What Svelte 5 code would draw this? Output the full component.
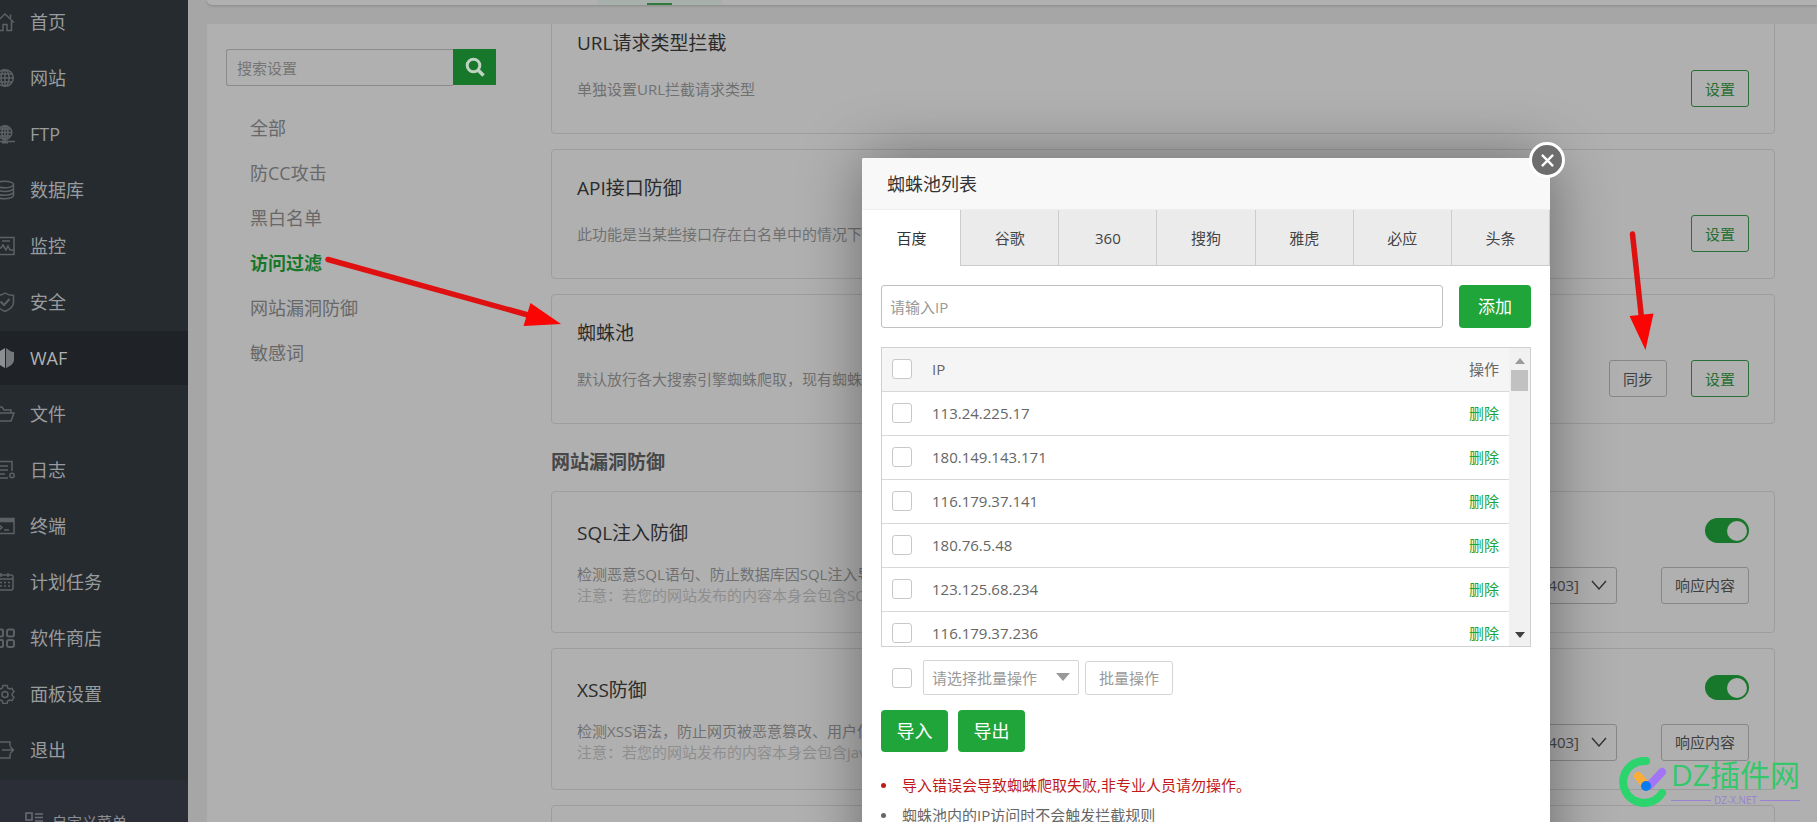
<script>
  const nav = [
    { label: '首页', icon: 'home' },
    { label: '网站', icon: 'globe' },
    { label: 'FTP', icon: 'ftp' },
    { label: '数据库', icon: 'db' },
    { label: '监控', icon: 'monitor' },
    { label: '安全', icon: 'safe' },
    { label: 'WAF', icon: 'waf', active: true },
    { label: '文件', icon: 'folder' },
    { label: '日志', icon: 'log' },
    { label: '终端', icon: 'term' },
    { label: '计划任务', icon: 'cron' },
    { label: '软件商店', icon: 'store' },
    { label: '面板设置', icon: 'gear' },
    { label: '退出', icon: 'exit' }
  ];
  const filters = ['全部', '防CC攻击', '黑白名单', '访问过滤', '网站漏洞防御', '敏感词'];
  const basic = [
    { title: 'URL请求类型拦截', desc: '单独设置URL拦截请求类型' },
    { title: 'API接口防御', desc: '此功能是当某些接口存在白名单中的情况下' },
    { title: '蜘蛛池', desc: '默认放行各大搜索引擎蜘蛛爬取，现有蜘蛛', sync: true }
  ];
  const leaks = [
    { id: 'sql', title: 'SQL注入防御', desc: '检测恶意SQL语句、防止数据库因SQL注入导', note: '注意：若您的网站发布的内容本身会包含SQL' },
    { id: 'xss', title: 'XSS防御', desc: '检测XSS语法，防止网页被恶意篡改、用户信', note: '注意：若您的网站发布的内容本身会包含java' }
  ];
  const tabs = ['百度', '谷歌', '360', '搜狗', '雅虎', '必应', '头条'];
  const ips = ['113.24.225.17', '180.149.143.171', '116.179.37.141', '180.76.5.48', '123.125.68.234', '116.179.37.236'];
  let tab = $state('百度');
  let filter = $state('访问过滤');
</script>

<div class="app">
  <aside class="sidebar">
    <nav>
      {#each nav as item}
        <a href="#{item.icon}" class="nav-item" class:active={item.active}>
          <svg viewBox="0 0 20 20" fill="none" stroke="currentColor" stroke-width="1.5" aria-hidden="true">
            {#if item.icon === 'home'}
              <path d="M1 10.5 10 2l9 8.500M15.500 6V2.500M3.500 9v9.500h4.500v-6h4v6h4.500V9" />
            {:else if item.icon === 'globe'}
              <circle cx="10" cy="10" r="8.300" /><ellipse cx="10" cy="10" rx="4" ry="8.300" /><path d="M10 2v16M2 10h16M3 6h14M3 14h14" />
            {:else if item.icon === 'ftp'}
              <circle cx="10" cy="8.500" r="6.800" /><ellipse cx="10" cy="8.500" rx="3" ry="6.800" /><path d="M10 2v15M3.500 8.500h13M4.500 5h11M4.500 12h11M0 17.500h20" /><path d="M7 18h6" stroke-width="3" />
            {:else if item.icon === 'db'}
              <ellipse cx="9.500" cy="4.500" rx="9" ry="3.300" /><path d="M.5 4.500v11c0 1.800 4 3.300 9 3.300s9-1.500 9-3.300v-11M.5 8.200c0 1.800 4 3.300 9 3.300s9-1.500 9-3.300M.5 12c0 1.800 4 3.300 9 3.300s9-1.500 9-3.300" />
            {:else if item.icon === 'monitor'}
              <rect x="1" y="1.500" width="18" height="17" /><path d="M7 5h8M2 12h4l2-3 3 5 2-4 2 4h4" />
            {:else if item.icon === 'safe'}
              <path d="M10 1c3 2 6 2.500 8.500 2.500v7c0 4-4 7-8.500 9-4.500-2-8.500-5-8.500-9v-7C4 3.500 7 3 10 1z" /><path d="m5.500 9.500 3.500 3.500 5.500-6" stroke-width="2" />
            {:else if item.icon === 'waf'}
              <path d="M10 0v20C4 17 1 14 1 11V4c3 0 6-2 9-4z" fill="#8d8f92" stroke="none" /><path d="M11 0c3 2 5 4 8 4v8c0 3-3 6-8 8z" fill="#74777a" stroke="none" />
            {:else if item.icon === 'folder'}
              <path d="M1 17V3h6l2 3h7v3M1 17h15l3-8H5L1 17" />
            {:else if item.icon === 'log'}
              <path d="M17 11V1.500H1V18h12M5 6h8M5 10h8M5 14h5" /><circle cx="17" cy="15.500" r="2.200" />
            {:else if item.icon === 'term'}
              <rect x="1" y="2.500" width="18" height="15" /><path d="M1 4.500h18" stroke-width="3.500" /><path d="m4 9 3 2.500L4 14M9 14h5" />
            {:else if item.icon === 'cron'}
              <rect x="1" y="3" width="17" height="15" rx="2" /><path d="M1 7h17M6 1v4M13 1v4M5 10.500h2M9 10.500h2M13 10.500h2M5 14h2M9 14h2M13 14h2" />
            {:else if item.icon === 'store'}
              <g stroke-width="2"><rect x="1" y="1.500" width="7" height="7" rx="1" /><rect x="12" y="1.500" width="7" height="7" rx="2" /><rect x="1" y="12" width="7" height="7" rx="1" /><rect x="12" y="12" width="7" height="7" rx="2" /></g>
            {:else if item.icon === 'gear'}
              <path d="M8 1.500h4l.7 2.500 1.800 1 2.500-.7 2 3.400-1.800 1.900v1.800l1.800 1.900-2 3.400-2.500-.7-1.800 1-.7 2.500H8L7.300 17l-1.800-1-2.500.7-2-3.400 1.800-1.900V9.600L1 7.700l2-3.400 2.500.7 1.800-1z" /><circle cx="10" cy="10.500" r="3" />
            {:else}
              <path d="M15 6V2H1v16h14v-4M7 10h11M15 6.500l3.500 3.500-3.500 3.500" />
            {/if}
          </svg>
          <span>{item.label}</span>
        </a>
      {/each}
    </nav>
    <a href="#custom" class="custom">
      <svg viewBox="0 0 18 18" fill="none" stroke="currentColor" stroke-width="1.500" aria-hidden="true">
        <path d="M1 1h6v7H1zM1 12h6v5H1zM10 2h8M10 5.500h8M10 9h8M10 13h8M10 16.500h8" />
      </svg>
      <span>自定义菜单</span>
    </a>
  </aside>

  <main>
    <header class="topbar"><div class="toptab"></div></header>

    <section class="panel">
      <div class="filter">
        <form class="search">
          <input type="text" placeholder="搜索设置" aria-label="搜索设置" />
          <button type="button" aria-label="搜索">
            <svg viewBox="0 0 20 20" fill="none" stroke="currentColor" aria-hidden="true">
              <circle cx="8.500" cy="8.500" r="6.300" stroke-width="3" /><path d="m13 13 5.500 5.500" stroke-width="3.500" />
            </svg>
          </button>
        </form>
        <ul>
          {#each filters as f}
            <li><button type="button" class:on={filter === f} onclick={() => (filter = f)}>{f}</button></li>
          {/each}
        </ul>
      </div>

      <div class="content">
        {#each basic as c}
          <article class="card">
            <h3>{c.title}</h3>
            <div class="row">
              <p>{c.desc}</p>
              <div class="actions">
                {#if c.sync}<button type="button" class="btn">同步</button>{/if}
                <button type="button" class="btn green">设置</button>
              </div>
            </div>
          </article>
        {/each}

        <h2>网站漏洞防御</h2>

        {#each leaks as c}
          <article class="card tall">
            <div class="row head">
              <h3>{c.title}</h3>
              <label class="switch"><input type="checkbox" checked aria-label={c.title} /><i></i></label>
            </div>
            <div class="row">
              <div class="text"><p>{c.desc}</p><p class="note">{c.note}</p></div>
              <div class="actions wide">
                <div class="code">
                  <select aria-label="响应"><option>[403]</option></select>
                  <svg viewBox="0 0 16 10" fill="none" stroke="currentColor" stroke-width="1.400" aria-hidden="true"><path d="m1 1 7 8 7-8" /></svg>
                </div>
                <button type="button" class="btn">响应内容</button>
              </div>
            </div>
          </article>
        {/each}
        <article class="card tall"></article>
      </div>
    </section>
  </main>

  <div class="dialog" role="dialog" aria-labelledby="dlg-title">
    <button type="button" class="close" aria-label="关闭">
      <svg viewBox="0 0 14 14" fill="none" stroke="currentColor" stroke-width="2.500" aria-hidden="true"><path d="m1 1 12 12M13 1 1 13" /></svg>
    </button>
    <h1 id="dlg-title">蜘蛛池列表</h1>
    <div class="tabs" role="tablist">
      {#each tabs as t}
        <button type="button" role="tab" aria-selected={tab === t} class:on={tab === t} onclick={() => (tab = t)}>{t}</button>
      {/each}
    </div>
    <div class="body">
      <div class="add">
        <input type="text" placeholder="请输入IP" aria-label="请输入IP" />
        <button type="button" class="solid">添加</button>
      </div>

      <div class="list">
        <table>
          <thead>
            <tr><th class="check"><input type="checkbox" aria-label="全选" /></th><th>IP</th><th class="op">操作</th></tr>
          </thead>
          <tbody>
            {#each ips as ip}
              <tr>
                <td class="check"><input type="checkbox" aria-label={ip} /></td>
                <td>{ip}</td>
                <td class="op"><a href="#del">删除</a></td>
              </tr>
            {/each}
          </tbody>
        </table>
        <div class="scroll">
          <svg viewBox="0 0 10 6" fill="#9b9b9b" aria-hidden="true"><path d="M5 0l5 6H0z" /></svg>
          <div class="thumb"></div>
          <svg viewBox="0 0 10 6" fill="#404040" aria-hidden="true"><path d="M5 6l5-6H0z" /></svg>
        </div>
      </div>

      <div class="batch">
        <input type="checkbox" aria-label="批量" />
        <div class="pick">
          <select aria-label="批量操作"><option>请选择批量操作</option></select>
          <svg viewBox="0 0 14 8" fill="currentColor" aria-hidden="true"><path d="M0 0h14L7 8z" /></svg>
        </div>
        <button type="button">批量操作</button>
      </div>

      <div class="io">
        <button type="button" class="solid">导入</button>
        <button type="button" class="solid">导出</button>
      </div>

      <ul class="tips">
        <li class="warn">导入错误会导致蜘蛛爬取失败,非专业人员请勿操作。</li>
        <li>蜘蛛池内的IP访问时不会触发拦截规则</li>
      </ul>
    </div>
  </div>

  <svg class="marks" width="1817" height="822" viewBox="0 0 1817 822" aria-hidden="true">
    <g stroke="#df1010" stroke-width="5.500" stroke-linecap="round"><path d="M328 259.500 528 315" /><path d="m1632.500 234 9 84" /></g>
    <g fill="#fb0404"><path d="M561 324 530.500 303l-7 23z" /><path d="m1645.500 350-16-34 24-2.500z" /></g>
  </svg>

  <div class="brand">
    <svg viewBox="0 0 48 52" fill="none" stroke-linecap="round" aria-hidden="true">
      <path d="M27 5A21 21 0 1 0 43 37" stroke="#2bd46d" stroke-width="8" />
      <path d="m19 20 7 8" stroke="#ffae35" stroke-width="8" />
      <path d="M43 16 31 29" stroke="#a374f5" stroke-width="8" />
      <circle cx="27" cy="30" r="5" fill="#0b7cf0" />
    </svg>
    <div>
      <strong>DZ插件网</strong>
      <small>DZ-X.NET</small>
    </div>
  </div>
</div>

<style>
  :global(body) { overflow: hidden; }
  .app, .app :global(*) { box-sizing: border-box; }
  .app {
    position: relative;
    display: grid;
    grid-template-columns: 188px 1fr;
    height: 100vh;
    overflow: hidden;
    background: #a6a6a6;
    font-family: "Open Sans", "Noto Sans CJK SC", sans-serif;
    font-size: 15px;
    line-height: 20px;
    color: #666;
  }
  button, input, select { font: inherit; color: inherit; margin: 0; }
  button { cursor: pointer; padding: 0; white-space: nowrap; }
  a { color: inherit; text-decoration: none; }
  h1, h2, h3, p, ul { margin: 0; padding: 0; font-weight: 400; }
  ul { list-style: none; }
  select { appearance: none; outline: none; }
  svg { display: block; flex: none; }

  .sidebar { overflow: hidden; background: #262b30; display: flex; flex-direction: column; }
  nav { display: flex; flex-direction: column; gap: 2px; margin-top: -5px; padding-bottom: 3px; flex: none; }
  .nav-item { display: flex; align-items: center; gap: 15px; height: 54px; margin-left: -5px; font-size: 18px; color: #999c9e; }
  .nav-item svg { width: 20px; height: 20px; color: #5d6165; }
  .nav-item.active { background: #1f2227; color: #b0b1b3; }
  .custom { display: flex; gap: 9px; flex: none; height: 80px; padding: 32px 0 0 25px; color: #8b8d91; background: #2b2e37; }
  .custom svg { width: 18px; height: 18px; color: #6b6e74; }

  main { display: flex; flex-direction: column; gap: 19px; min-width: 0; padding-left: 19px; overflow: hidden; }
  .topbar { flex: none; height: 5px; padding-left: 390px; background: #b1b1b1; border-radius: 0 0 0 6px; box-shadow: 0 1px 3px rgba(0, 0, 0, .18); }
  .toptab { width: 125px; height: 5px; background: linear-gradient(#2f7a3c, #2f7a3c) center bottom / 25px 2px no-repeat #a8b0ac; }
  .panel { flex: 1; min-height: 0; display: grid; grid-template-columns: 289px 1fr; gap: 55px; padding: 0 42px 0 0; background: #b0b0b0; overflow: hidden; }
  .filter { padding: 25px 0 0 19px; }
  .search { display: flex; }
  .search input { flex: 1; min-width: 0; height: 37px; padding: 0 10px; background: none; border: 1px solid #8b8b8b; border-right: 0; border-radius: 3px 0 0 3px; outline: none; }
  .search input::placeholder { color: #757575; }
  .search button { width: 43px; height: 36px; display: grid; place-items: center; border: 0; background: #17772a; color: #bfd3c2; }
  .search svg { width: 20px; height: 20px; }
  .filter ul { padding: 19px 0 0 24px; }
  .filter li button { height: 45px; border: 0; background: none; font-size: 18px; color: #686868; }
  .filter li .on { color: #17772a; font-weight: 700; }

  .content { display: flex; flex-direction: column; gap: 15px; min-width: 0; margin-top: -20px; }
  .card { flex: none; height: 130px; padding: 25px 25px 0; border: 1px solid #9d9d9d; border-radius: 4px; }
  .card h3 { font-size: 19px; line-height: 26px; color: #2b2b2b; }
  .row { display: flex; justify-content: space-between; align-items: center; margin-top: 14px; height: 37px; white-space: nowrap; }
  .row p { color: #707070; }
  .actions { display: flex; gap: 24px; }
  .actions.wide { gap: 44px; }
  .btn { height: 37px; padding: 0 13px; border: 1px solid #878787; border-radius: 3px; background: none; color: #3f3f3f; }
  .btn.green { border-color: #276f35; color: #276f35; }
  h2 { font-size: 19px; line-height: 28px; font-weight: 700; color: #474747; padding: 9px 0 0; }
  .card.tall { height: 142px; padding-top: 26px; }
  .row.head { align-items: flex-start; margin: 0; height: 30px; }
  .row.head h3 { line-height: 30px; }
  .row.head + .row { margin-top: 17px; height: 40px; }
  .text p { line-height: 21px; }
  .row .note { color: #8e8e8e; }
  .switch { display: block; }
  .switch input { position: absolute; opacity: 0; }
  .switch i { display: flex; justify-content: flex-end; align-items: center; width: 44px; height: 25px; padding: 2px; border-radius: 13px; background: #17772a; }
  .switch i::after { content: ""; width: 20px; height: 20px; border-radius: 50%; background: #b0b0b0; }
  .code { position: relative; width: 100px; }
  .code select { width: 100%; height: 37px; padding: 0 37px 0 8px; text-align-last: right; border: 1px solid #878787; border-radius: 3px; background: none; color: #444; }
  .code svg { position: absolute; right: 10px; top: 13px; width: 16px; height: 10px; color: #333; pointer-events: none; }

  .dialog { position: absolute; top: 158px; right: 267px; width: 688px; height: 760px; background: #fff; border-radius: 2px 2px 0 0; box-shadow: 1px 1px 62px rgba(0, 0, 0, .4); }
  .close { position: absolute; top: -16px; right: -15px; width: 36px; height: 36px; display: grid; place-items: center; border: 3px solid #fff; border-radius: 50%; background: #6e6e6e; color: #fff; }
  .close svg { width: 13px; height: 13px; }
  .dialog h1 { height: 52px; padding: 0 25px; border-bottom: 1px solid #eee; border-radius: 2px 2px 0 0; background: #f8f8f8; font-size: 18px; line-height: 53px; color: #333; }
  .tabs { display: flex; }
  .tabs button { flex: 1; height: 56px; border: 0; border-left: 1px solid #ccc; border-bottom: 1px solid #ccc; background: #ebebeb; color: #444; }
  .tabs button:last-child { border-right: 1px solid #ccc; }
  .tabs .on { border-color: #fff; background: #fff; color: #333; }
  .body { padding: 19px; }
  .add { display: flex; gap: 16px; }
  .add input { flex: 1; min-width: 0; height: 43px; padding: 0 8px; border: 1px solid #c0c0c0; border-radius: 3px; outline: none; }
  .add input::placeholder { color: #999; }
  .solid { border: 0; border-radius: 4px; background: #20a53a; color: #fff; }
  .add .solid { width: 72px; font-size: 17px; }

  .list { display: flex; height: 300px; margin-top: 19px; border: 1px solid #d0d0d0; overflow: hidden; }
  table { flex: 1; align-self: flex-start; border-collapse: collapse; }
  th, td { height: 44px; padding: 0; text-align: left; font-weight: 400; border-bottom: 1px solid #d8d8d8; }
  th { height: 43px; }
  thead { background: #f5f5f5; }
  .check { width: 50px; padding-left: 10px; }
  .op { text-align: right; padding-right: 10px; }
  td.op { color: #20a53a; }
  input[type="checkbox"]:not(.switch input) { appearance: none; display: block; flex: none; width: 20px; height: 20px; border: 1px solid #c8c8c8; border-radius: 3px; background: #fff; }
  .scroll { width: 21px; padding: 10px 0 8px; display: flex; flex-direction: column; align-items: center; gap: 6px; background: #f1f1f1; }
  .scroll svg { width: 10px; height: 6px; }
  .scroll svg:last-child { margin-top: auto; }
  .thumb { width: 17px; height: 21px; background: #c1c1c1; }

  .batch { display: flex; align-items: center; margin: 13px 0 0 11px; color: #999; }
  .pick { position: relative; width: 156px; margin: 0 6px 0 11px; }
  .pick select { width: 100%; height: 35px; padding: 0 8px; border: 1px solid #d5d5d5; border-radius: 2px; background: #fff; }
  .pick svg { position: absolute; right: 9px; top: 13px; width: 14px; height: 8px; pointer-events: none; }
  .batch button { height: 34px; padding: 0 13px; border: 1px solid #d5d5d5; border-radius: 3px; background: #fff; }
  .io { display: flex; gap: 10px; margin-top: 15px; }
  .io .solid { width: 67px; height: 42px; font-size: 18px; }
  .tips { margin-top: 18px; }
  .tips li { display: flex; align-items: center; gap: 16px; height: 30px; white-space: nowrap; }
  .tips li::before { content: ""; width: 5px; height: 5px; border-radius: 50%; background: currentColor; }
  .tips .warn { color: #c21a1a; }

  .marks { position: absolute; top: 0; left: 0; pointer-events: none; }
  .brand { position: absolute; right: 17px; bottom: 14px; display: flex; gap: 4px; pointer-events: none; }
  .brand svg { width: 48px; height: 52px; }
  .brand strong { display: block; font-weight: 400; font-size: 30px; line-height: 38px; color: #35c76b; white-space: nowrap; }
  .brand small { display: flex; align-items: center; gap: 3px; font-size: 10px; line-height: 12px; color: #9783cf; }
  .brand small::before, .brand small::after { content: ""; flex: 1; height: 1px; background: #9783cf; }
</style>
